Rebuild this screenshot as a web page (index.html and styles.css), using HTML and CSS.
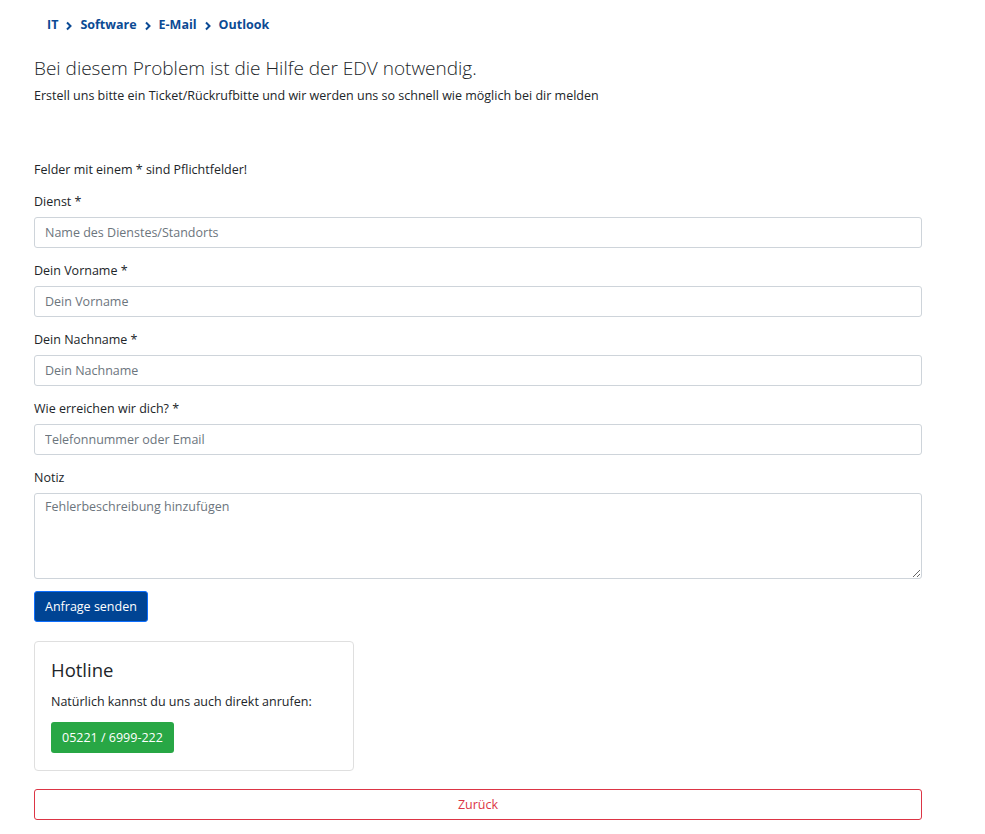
FILE: index.html
```html
<!DOCTYPE html>
<html lang="de">
<head>
  <meta charset="UTF-8">
  <title>EDV Hilfe</title>
  <link rel="stylesheet" href="styles.css">
</head>
<body>
  <nav class="crumbs">
    <a href="#">IT</a>
    <span class="sep"><svg width="8" height="10" viewBox="0 0 8 10"><path d="M2 1.5 L5.5 5 L2 8.5" fill="none" stroke="#0b4a94" stroke-width="2"/></svg></span>
    <a href="#">Software</a>
    <span class="sep"><svg width="8" height="10" viewBox="0 0 8 10"><path d="M2 1.5 L5.5 5 L2 8.5" fill="none" stroke="#0b4a94" stroke-width="2"/></svg></span>
    <a href="#">E-Mail</a>
    <span class="sep"><svg width="8" height="10" viewBox="0 0 8 10"><path d="M2 1.5 L5.5 5 L2 8.5" fill="none" stroke="#0b4a94" stroke-width="2"/></svg></span>
    <a href="#">Outlook</a>
  </nav>

  <main class="page">
    <h2 class="title">Bei diesem Problem ist die Hilfe der EDV notwendig.</h2>
    <p class="lead">Erstell uns bitte ein Ticket/Rückrufbitte und wir werden uns so schnell wie möglich bei dir melden</p>

    <form class="ticket-form">
      <p class="hint">Felder mit einem * sind Pflichtfelder!</p>

      <div class="field">
        <label for="dienst">Dienst *</label>
        <input type="text" id="dienst" placeholder="Name des Dienstes/Standorts">
      </div>
      <div class="field">
        <label for="vorname">Dein Vorname *</label>
        <input type="text" id="vorname" placeholder="Dein Vorname">
      </div>
      <div class="field">
        <label for="nachname">Dein Nachname *</label>
        <input type="text" id="nachname" placeholder="Dein Nachname">
      </div>
      <div class="field">
        <label for="kontakt">Wie erreichen wir dich? *</label>
        <input type="text" id="kontakt" placeholder="Telefonnummer oder Email">
      </div>
      <div class="field">
        <label for="notiz">Notiz</label>
        <textarea id="notiz" rows="3" placeholder="Fehlerbeschreibung hinzufügen"></textarea>
      </div>

      <button type="button" class="btn btn-primary">Anfrage senden</button>
    </form>

    <div class="hotline">
      <h3>Hotline</h3>
      <p>Natürlich kannst du uns auch direkt anrufen:</p>
      <a href="#" class="btn btn-success">05221 / 6999-222</a>
    </div>

    <a href="#" class="btn btn-back">Zurück</a>
  </main>
</body>
</html>
```

FILE: styles.css
```css
* {
  box-sizing: border-box;
}

body {
  margin: 0;
  font-family: "Open Sans", "Noto Sans", sans-serif;
  font-size: 12.5px;
  line-height: 1.5;
  color: #212529;
  background: #ffffff;
}

.crumbs {
  display: flex;
  align-items: center;
  gap: 7px;
  padding: 10px 0 0 47px;
  height: 41px;
}

.crumbs a {
  color: #0b4a94;
  font-weight: 700;
  text-decoration: none;
}

.sep {
  display: flex;
}

.page {
  width: 888px;
  margin-left: 34px;
  padding-bottom: 14px;
}

.title {
  margin: 12px 0 0;
  font-size: 19px;
  font-weight: 300;
  line-height: 30px;
}

.lead {
  margin: 4px 0 0;
}

.ticket-form {
  margin-top: 55px;
}

.hint {
  margin: 0 0 11px;
}

.field {
  margin-bottom: 12px;
}

.field label {
  display: block;
  margin-bottom: 5px;
  line-height: 21px;
}

.field input,
.field textarea {
  display: block;
  width: 100%;
  height: 31px;
  padding: 4px 10px;
  font: inherit;
  color: #495057;
  border: 1px solid #ced4da;
  border-radius: 3px;
}

.field textarea {
  height: 86px;
  resize: vertical;
}

::placeholder {
  color: #6c757d;
}

.btn {
  display: inline-block;
  height: 31px;
  padding: 5px 10px;
  font: inherit;
  line-height: 19px;
  border: 1px solid transparent;
  border-radius: 3px;
  text-decoration: none;
  cursor: pointer;
}

.btn-primary {
  background: #004494;
  border-color: #0d6efd;
  color: #ffffff;
}

.hotline {
  width: 320px;
  margin-top: 19px;
  padding: 15px 16px 17px;
  border: 1px solid #dfdfdf;
  border-radius: 4px;
}

.hotline h3 {
  margin: 0 0 10px;
  font-size: 18.5px;
  font-weight: 400;
  line-height: 26px;
}

.hotline p {
  margin: 0 0 11px;
}

.btn-success {
  background: #28a745;
  color: #ffffff;
}

.btn-back {
  display: block;
  margin-top: 18px;
  text-align: center;
  color: #dc3545;
  border-color: #dc3545;
}
```
